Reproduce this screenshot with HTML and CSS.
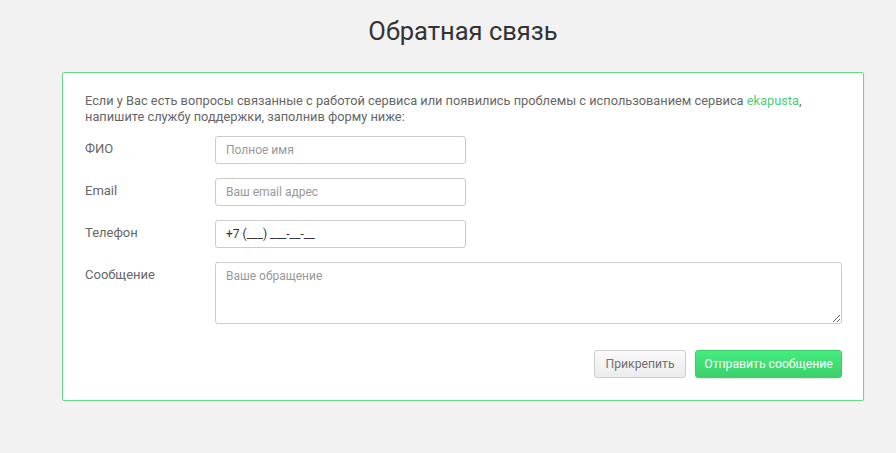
FILE: index.html
```html
<!DOCTYPE html>
<html lang="ru">
<head>
<meta charset="utf-8">
<link rel="stylesheet" href="styles.css">
</head>
<body>
<div class="page">
  <h1 class="title">Обратная связь</h1>
  <div class="card">
    <p class="intro">Если у Вас есть вопросы связанные с работой сервиса или появились проблемы с использованием сервиса <a class="link" href="#">ekapusta</a>, напишите службу поддержки, заполнив форму ниже:</p>
    <form class="form">
      <div class="row">
        <label class="label">ФИО</label>
        <input class="input" type="text" placeholder="Полное имя">
      </div>
      <div class="row">
        <label class="label">Email</label>
        <input class="input" type="text" placeholder="Ваш email адрес">
      </div>
      <div class="row">
        <label class="label">Телефон</label>
        <input class="input input-value" type="text" value="+7 (___) ___-__-__">
      </div>
      <div class="row">
        <label class="label">Сообщение</label>
        <textarea class="textarea" placeholder="Ваше обращение"></textarea>
      </div>
      <div class="actions">
        <button type="button" class="btn btn-light">Прикрепить</button>
        <button type="button" class="btn btn-green">Отправить сообщение</button>
      </div>
    </form>
  </div>
</div>
</body>
</html>
```
FILE: styles.css
```css
html, body {
  margin: 0;
  padding: 0;
  background: #f2f2f2;
  font-family: Roboto, "Noto Sans", sans-serif;
  color: #666;
}
.page {
  padding: 13px 32px 0 62px;
}
.title {
  margin: 0 0 23px;
  text-align: center;
  font-size: 25.5px;
  font-weight: 400;
  color: #333;
  line-height: 36px;
}
.card {
  background: #fff;
  border: 1px solid #66da86;
  border-radius: 2px;
  padding: 20px 21px 22px 22px;
  box-shadow: 0 1px 2px rgba(0, 0, 0, 0.06);
}
.intro {
  margin: 0 0 11px;
  font-size: 12.8px;
  line-height: 16px;
  color: #666;
}
.link {
  color: #4ccf76;
  text-decoration: none;
}
.form {
  display: flex;
  flex-direction: column;
  gap: 14px;
}
.row {
  display: flex;
  align-items: flex-start;
}
.label {
  width: 130px;
  flex: none;
  font-size: 13px;
  line-height: 16px;
  padding-top: 5px;
  color: #666;
}
.input {
  box-sizing: border-box;
  width: 251px;
  height: 28px;
  border: 1px solid #ccc;
  border-radius: 3px;
  padding: 0 10px;
  font-family: Roboto, sans-serif;
  font-size: 12px;
  color: #555;
  background: #fff;
  outline: none;
}
.input::placeholder, .textarea::placeholder {
  color: #999;
}
.input-value {
  color: #333;
}
.textarea {
  box-sizing: border-box;
  flex: 1;
  height: 62px;
  border: 1px solid #ccc;
  border-radius: 3px;
  padding: 6px 10px;
  font-family: Roboto, sans-serif;
  font-size: 12px;
  color: #555;
  resize: both;
  outline: none;
}
.actions {
  display: flex;
  justify-content: flex-end;
  gap: 9px;
  margin-top: 12px;
}
.btn {
  box-sizing: border-box;
  height: 28px;
  border-radius: 3px;
  font-family: Roboto, sans-serif;
  font-size: 12.2px;
  padding: 0;
  white-space: nowrap;
  cursor: pointer;
}
.btn-light {
  width: 92px;
  background: linear-gradient(#fafafa, #ececec);
  border: 1px solid #ccc;
  color: #707070;
}
.btn-green {
  width: 147px;
  background: linear-gradient(#44ec7e, #3cd06b);
  border: 1px solid #3cd06b;
  color: #fff;
  box-shadow: 0 1px 2px rgba(0, 0, 0, 0.12);
}
```
